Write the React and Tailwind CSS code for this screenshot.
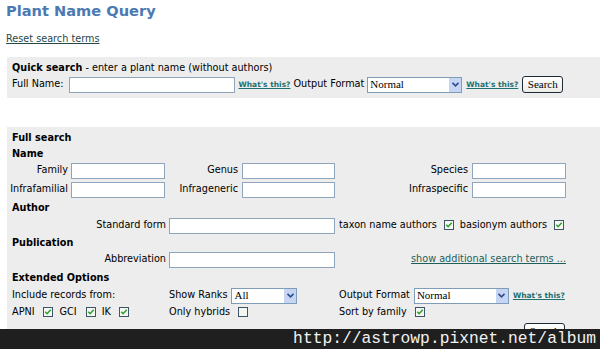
import React from "react";

const Input = ({ w }) => (
  <div className={`${w} h-[16px] bg-white border border-[#8fa5bb]`} />
);

const Select = ({ w, value }) => (
  <div className={`${w} h-[16px] bg-white border border-[#7f9db9] flex items-center`}>
    <span className="flex-1 pl-[2px] font-['Liberation_Serif'] text-[11px] leading-none text-black">
      {value}
    </span>
    <span className="w-[13px] h-[14px] bg-[#c6d5f3] flex items-center justify-center border-l border-white">
      <svg width="7" height="5" viewBox="0 0 7 5">
        <path d="M0.5 0.8 L3.5 3.8 L6.5 0.8" fill="none" stroke="#2b4d8c" strokeWidth="1.6" />
      </svg>
    </span>
  </div>
);

const Check = ({ on = true }) => (
  <svg width="10" height="10" viewBox="0 0 10 10" className="shrink-0">
    <rect x="0.5" y="0.5" width="9" height="9" fill="#f6f6f2" stroke="#3d5566" />
    {on && (
      <path d="M2.3 4.8 L4.1 6.7 L7.7 2.8" fill="none" stroke="#27a02a" strokeWidth="1.5" />
    )}
  </svg>
);

const Whats = () => (
  <a className="text-[7.5px] font-bold text-[#217070] underline">What's this?</a>
);

const Button = ({ className = "" }) => (
  <div
    className={`w-[41px] h-[17px] bg-gradient-to-b from-white to-[#ecebe6] border border-[#1d2a3a] rounded-[3px] flex items-center justify-center font-['Liberation_Serif'] text-[11px] text-black ${className}`}
  >
    Search
  </div>
);

export default function App() {
  return (
    <div className="relative w-[600px] h-[349px] overflow-hidden bg-white font-['DejaVu_Sans',sans-serif] text-[9.7px] text-black">
      <div className="pl-[6px] h-[22px] leading-[22px] text-[14.6px] font-bold text-[#4b7ab3]">
        Plant Name Query
      </div>
      <div className="pl-[6px] mt-[10px] h-[14px] leading-[14px]">
        <a className="text-[#264848] underline">Reset search terms</a>
      </div>

      {/* Quick search */}
      <div className="ml-[7px] mt-[11px] w-[593px] bg-[#ededed] pl-[5px] pt-[3px] pb-[4px]">
        <div className="h-[15px] leading-[15px]">
          <b>Quick search</b> - enter a plant name (without authors)
        </div>
        <div className="h-[19px] flex items-center">
          <span>Full Name:</span>
          <div className="ml-[5px]"><Input w="w-[166px]" /></div>
          <div className="ml-[4px]"><Whats /></div>
          <span className="ml-[3px]">Output Format</span>
          <div className="ml-[3px]"><Select w="w-[95px]" value="Normal" /></div>
          <div className="ml-[4px]"><Whats /></div>
          <Button className="ml-[4px]" />
        </div>
      </div>

      {/* Full search */}
      <div className="ml-[7px] mt-[29px] w-[593px] bg-[#ededed] pl-[5px] pt-[2px] pb-[10px]">
        <div className="grid grid-cols-[59px_98px_73px_97px_133px_94px] items-center">
          <div className="col-span-6 h-[17px] leading-[17px] font-bold">Full search</div>
          <div className="col-span-6 h-[15px] leading-[15px] font-bold">Name</div>

          <div className="h-[19px] flex items-center justify-end pr-[3px]">Family</div>
          <Input w="w-[94px]" />
          <div className="text-right pr-[4px]">Genus</div>
          <Input w="w-[93px]" />
          <div className="text-right pr-[4px]">Species</div>
          <Input w="w-[94px]" />

          <div className="h-[19px] flex items-center justify-end pr-[3px]">Infrafamilial</div>
          <Input w="w-[94px]" />
          <div className="text-right pr-[4px]">Infrageneric</div>
          <Input w="w-[93px]" />
          <div className="text-right pr-[4px]">Infraspecific</div>
          <Input w="w-[94px]" />

          <div className="col-span-6 h-[17px] leading-[17px] font-bold">Author</div>
          <div className="col-span-2 h-[19px] flex items-center justify-end pr-[3px]">Standard form</div>
          <div className="col-span-2"><Input w="w-[166px]" /></div>
          <div className="col-span-2 flex items-center">
            <span>taxon name authors</span>
            <span className="ml-[7px]"><Check /></span>
            <span className="ml-[6px]">basionym authors</span>
            <span className="ml-[7px]"><Check /></span>
          </div>

          <div className="col-span-6 h-[15px] leading-[15px] font-bold">Publication</div>
          <div className="col-span-2 h-[19px] flex items-center justify-end pr-[3px]">Abbreviation</div>
          <div className="col-span-2"><Input w="w-[166px]" /></div>
          <div className="col-span-2 text-right">
            <a className="text-[#1f5f5b] underline">show additional search terms ...</a>
          </div>

          <div className="col-span-6 h-[17px] leading-[17px] font-bold">Extended Options</div>
          <div className="col-span-2 h-[19px] flex items-center">Include records from:</div>
          <div className="col-span-2 flex items-center">
            <span>Show Ranks</span>
            <div className="ml-[4px]"><Select w="w-[66px]" value="All" /></div>
          </div>
          <div className="col-span-2 flex items-center">
            <span>Output Format</span>
            <div className="ml-[4px]"><Select w="w-[95px]" value="Normal" /></div>
            <div className="ml-[4px]"><Whats /></div>
          </div>

          <div className="col-span-2 h-[14px] flex items-center">
            <span>APNI</span>
            <span className="ml-[8px]"><Check /></span>
            <span className="ml-[7px]">GCI</span>
            <span className="ml-[9px]"><Check /></span>
            <span className="ml-[6px]">IK</span>
            <span className="ml-[8px]"><Check /></span>
          </div>
          <div className="col-span-2 flex items-center">
            <span>Only hybrids</span>
            <span className="ml-[8px]"><Check on={false} /></span>
          </div>
          <div className="col-span-2 flex items-center">
            <span>Sort by family</span>
            <span className="ml-[8px]"><Check /></span>
          </div>

          <div className="col-span-6 flex justify-end pt-[3px]">
            <Button className="mr-[1px]" />
          </div>
        </div>
      </div>

      {/* watermark band */}
      <div className="absolute left-0 top-[329px] w-full h-[20px] bg-[#1f1f1f] flex items-center justify-end pr-[4px]">
        <span className="font-['Liberation_Mono',monospace] text-[16.3px] leading-none text-[#f2f2f2]">
          http://astrowp.pixnet.net/album
        </span>
      </div>
    </div>
  );
}
